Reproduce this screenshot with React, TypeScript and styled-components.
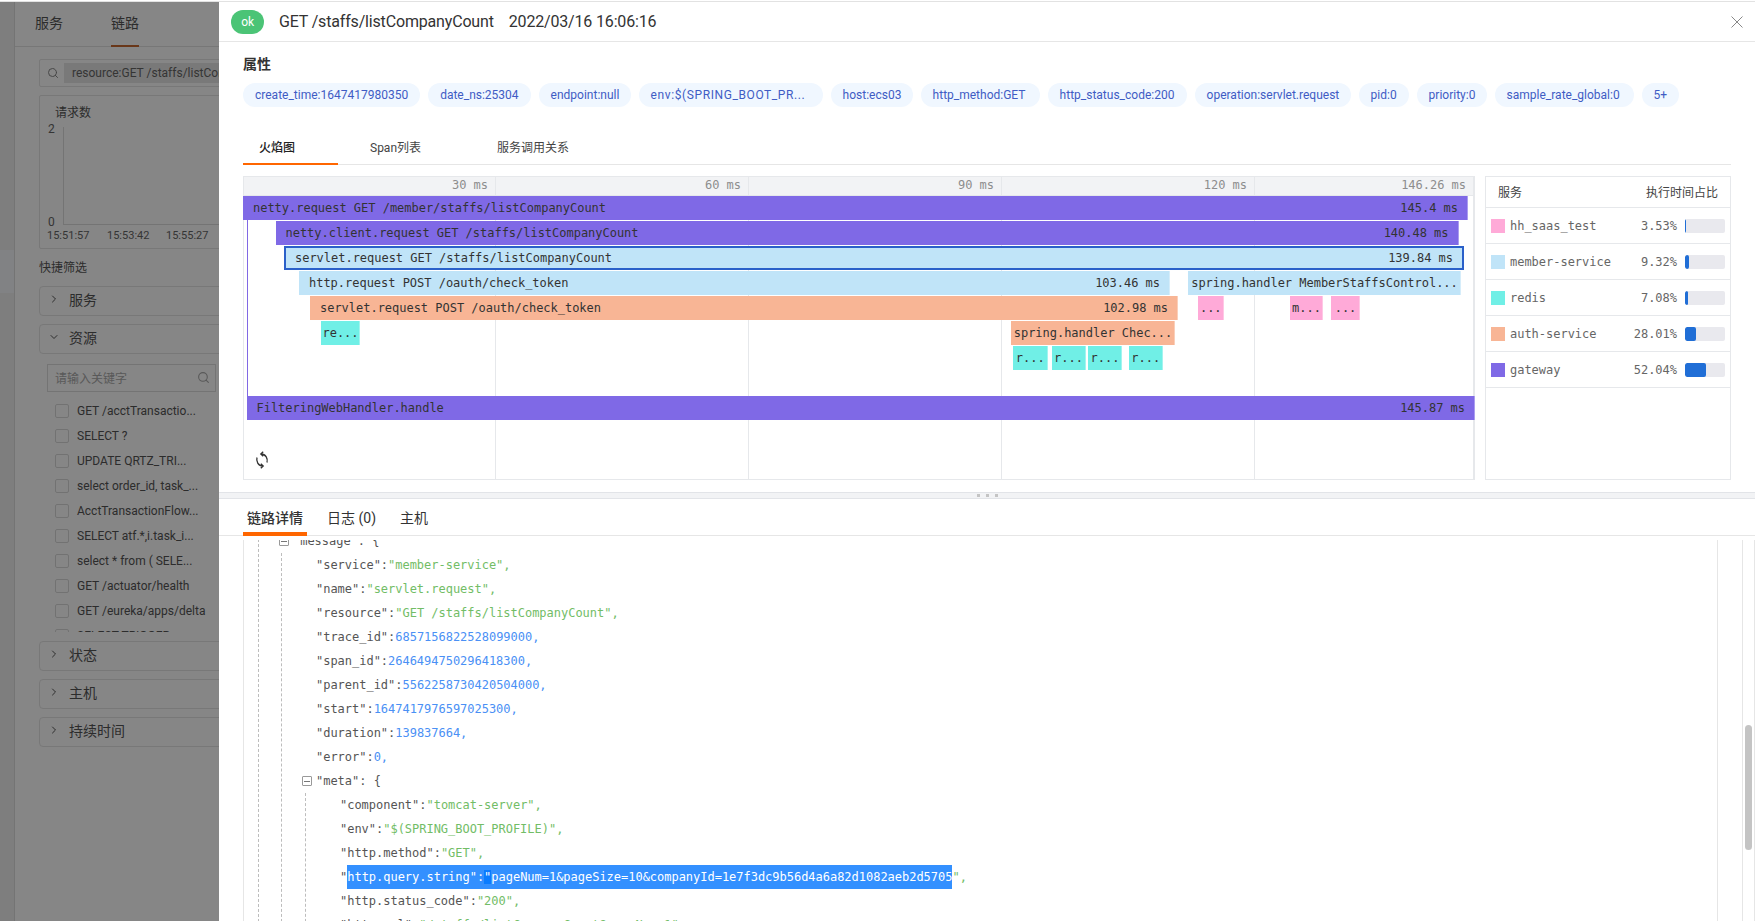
import React from 'react';
import styled, { createGlobalStyle } from 'styled-components';
import { FiChevronDown, FiChevronRight, FiSearch } from 'react-icons/fi';

const UI = `Roboto, "Noto Sans CJK SC", sans-serif`;
const MONO = `"DejaVu Sans Mono", "Noto Sans CJK SC", monospace`;

const Global = createGlobalStyle`
  html, body { margin: 0; padding: 0; height: 921px; overflow: hidden; background: #fff; }
  * { box-sizing: border-box; }
  body { font-family: ${UI}; font-size: 12px; color: #333; }
`;

const TopRule = styled.div`
  height: 2px;
  background: #fff;
  border-bottom: 1px solid #e2e2e2;
`;
const Shell = styled.div`
  display: flex;
  height: 919px;
`;

/* ---------- dimmed page behind the drawer ---------- */
const Behind = styled.aside`
  position: relative;
  width: 219px;
  flex: none;
  display: flex;
  overflow: hidden;
`;
const Mask = styled.div`
  position: absolute;
  inset: 0;
  background: rgba(0, 0, 0, 0.475);
`;
const NavStrip = styled.div`
  width: 15px;
  flex: none;
  background: #f0f0f0;
  border-right: 1px solid #dcdcdc;
  padding-top: 248px;
`;
const NavActive = styled.div`
  height: 43px;
  background: #f5f7fb;
`;
const BehindBody = styled.div`
  width: 600px;
  flex: none;
  color: #555;
`;
const PageTabs = styled.div`
  height: 45px;
  display: flex;
  gap: 48px;
  padding-left: 20px;
  border-bottom: 1px solid #e2e2e2;
`;
const PageTab = styled.div<{ $active?: boolean }>`
  height: 45px;
  padding-top: 10px;
  font-size: 14px;
  line-height: 22px;
  ${(p) => (p.$active ? 'border-bottom: 2px solid #c96a30;' : '')}
`;
const BehindInner = styled.div`
  padding: 12px 0 0 24px;
`;
const QueryBox = styled.div`
  height: 28px;
  display: flex;
  align-items: center;
  gap: 5px;
  padding-left: 7px;
  border: 1px solid #e4e4e4;
  border-radius: 2px;
  color: #888;
`;
const QueryChip = styled.div`
  height: 20px;
  line-height: 20px;
  padding-left: 8px;
  flex: 1;
  background: #e6e6e6;
  color: #666;
  font-size: 12px;
  white-space: nowrap;
`;
const ChartCard = styled.div`
  margin-top: 8px;
  height: 154px;
  border: 1px solid #e4e4e4;
  border-radius: 2px;
  padding: 8px 0 0 15px;
`;
const ChartTitle = styled.div`
  line-height: 18px;
  font-size: 12px;
`;
const ChartSvg = styled.svg`
  display: block;
  margin-left: -8px;
  font-family: ${UI};
  font-size: 11px;
`;
const QuickTitle = styled.div`
  margin-top: 9px;
  line-height: 20px;
  font-size: 12px;
`;
const Panel = styled.div<{ $gap?: number }>`
  margin-top: ${(p) => p.$gap ?? 8}px;
  height: 30px;
  display: flex;
  align-items: center;
  gap: 9px;
  padding: 0 0 5px 8px;
  border: 1px solid #e4e4e4;
  border-radius: 4px;
  font-size: 14px;
`;
const FilterInput = styled.div`
  margin: 10px 0 0 8px;
  height: 28px;
  width: 169px;
  display: flex;
  align-items: center;
  justify-content: space-between;
  padding: 0 5px 2px 7px;
  border: 1px solid #dcdcdc;
  color: #aaa;
  font-size: 12px;
`;
const FilterList = styled.div`
  margin: 6px 0 0 16px;
  height: 234px;
  overflow: hidden;
`;
const FilterItem = styled.label`
  height: 25px;
  display: flex;
  align-items: center;
  gap: 8px;
  font-size: 12px;
  white-space: nowrap;
`;
const Check = styled.span`
  width: 14px;
  height: 14px;
  border: 1px solid #d9d9d9;
  border-radius: 2px;
  flex: none;
`;

/* ---------- drawer ---------- */
const Drawer = styled.main`
  flex: 1;
  min-width: 0;
  display: flex;
  flex-direction: column;
  background: #fff;
`;
const Header = styled.header`
  height: 40px;
  flex: none;
  display: flex;
  align-items: center;
  padding: 0 12px;
  border-bottom: 1px solid #e6e6e6;
  font-size: 16px;
  letter-spacing: -0.17px;
  color: #333;
`;
const StatusBadge = styled.span`
  width: 33px;
  height: 24px;
  margin-right: 15px;
  border-radius: 12px;
  background: #4bc476;
  color: #fff;
  font-size: 12px;
  line-height: 24px;
  text-align: center;
`;
const Time = styled.span`
  margin-left: 15px;
`;
const CloseIcon = styled.svg`
  margin-left: auto;
  display: block;
`;
const Upper = styled.section`
  padding: 12px 24px 0;
  flex: none;
`;
const SectionTitle = styled.h3`
  margin: 0;
  font-size: 14px;
  line-height: 20px;
  font-weight: 600;
  color: #333;
`;
const Tags = styled.div`
  margin-top: 9px;
  display: flex;
  gap: 8px;
`;
const Tag = styled.span<{ $w?: number; $spaced?: boolean }>`
  height: 24px;
  line-height: 24px;
  padding: 0 12px;
  border-radius: 12px;
  background: #f0f7ff;
  color: #3f5cc4;
  font-size: 12px;
  white-space: nowrap;
  ${(p) => (p.$w ? `width: ${p.$w}px;` : '')}
  ${(p) => (p.$spaced ? 'letter-spacing: 0.6px;' : '')}
`;
const ViewTabs = styled.nav`
  margin-top: 26px;
  height: 32px;
  display: flex;
  gap: 16px;
  border-bottom: 1px solid #e6e6e6;
`;
const ViewTab = styled.div<{ $w: number; $active?: boolean }>`
  width: ${(p) => p.$w}px;
  height: 32px;
  padding-left: 16px;
  line-height: 31px;
  font-size: 12px;
  color: ${(p) => (p.$active ? '#222' : '#444')};
  ${(p) => (p.$active ? 'border-bottom: 2px solid #ff6600; font-weight: 500;' : '')}
`;
const Split = styled.div`
  margin-top: 11px;
  height: 304px;
  display: flex;
  gap: 10px;
`;
const Flame = styled.div`
  position: relative;
  width: 1232px;
  flex: none;
  display: flex;
  border: 1px solid #e6e8eb;
  border-top: 0;
`;
const FlameCol = styled.div<{ $w?: number }>`
  ${(p) => (p.$w ? `width: ${p.$w}px; flex: none;` : 'flex: 1;')}
  border-right: 1px solid #e6e8eb;
  &:last-of-type { border-right: 0; }
`;
const AxisCell = styled.div`
  height: 20px;
  background: #f2f3f5;
  border-top: 1px solid #e6e8eb;
  border-bottom: 1px solid #e6e8eb;
  padding-right: 7px;
  text-align: right;
  font: 12px/17px ${MONO};
  letter-spacing: -0.02px;
  color: #8d8d8d;
`;
const Bar = styled.div<{ $selected?: boolean; $tiny?: boolean }>`
  position: absolute;
  height: 24px;
  display: flex;
  align-items: center;
  justify-content: ${(p) => (p.$tiny ? 'center' : 'space-between')};
  padding: 0 ${(p) => (p.$tiny ? 0 : p.$selected ? 9 : 10)}px;
  font: 12px/24px ${MONO};
  letter-spacing: -0.02px;
  color: #333;
  white-space: pre;
  overflow: hidden;
  box-shadow: inset -1px 0 0 rgba(255, 255, 255, 0.35);
  ${(p) => (p.$selected ? 'border: 2px solid #2a60c9; box-shadow: none;' : '')}
`;
const Connector = styled.div`
  position: absolute;
  left: 3px;
  top: 44px;
  width: 1px;
  height: 176px;
  background: #8068e4;
`;
const RefreshIcon = styled.svg`
  position: absolute;
  left: 11px;
  top: 275px;
  display: block;
`;
const ServiceBox = styled.div`
  flex: 1;
  border: 1px solid #e6e8eb;
`;
const ServiceHead = styled.div`
  height: 31px;
  display: flex;
  align-items: center;
  justify-content: space-between;
  padding: 0 12px 2px;
  border-bottom: 1px solid #e6e8eb;
  font-size: 12px;
  color: #444;
`;
const ServiceRow = styled.div`
  height: 36px;
  display: flex;
  align-items: center;
  padding: 0 5px;
  border-bottom: 1px solid #e6e8eb;
  font: 12px ${MONO};
  letter-spacing: -0.02px;
  color: #666;
`;
const Swatch = styled.span<{ $c: string }>`
  width: 14px;
  height: 14px;
  margin-right: 5px;
  background: ${(p) => p.$c};
  flex: none;
`;
const ServiceName = styled.span`
  flex: 1;
`;
const Meter = styled.span`
  width: 40px;
  height: 14px;
  margin-left: 8px;
  background: #e9e9ee;
  border-radius: 2px;
  overflow: hidden;
  display: block;
`;
const MeterFill = styled.span`
  display: block;
  height: 100%;
  background: #206ed6;
  border-radius: 2px;
`;
const Divider = styled.div`
  margin-top: 12px;
  height: 7px;
  flex: none;
  display: flex;
  align-items: center;
  justify-content: center;
  gap: 6px;
  background: #f2f3f5;
  border-top: 1px solid #e2e4e8;
  border-bottom: 1px solid #e2e4e8;
`;
const Grip = styled.i`
  width: 3px;
  height: 3px;
  background: #c4c4c4;
`;
const DetailTabs = styled.nav`
  height: 37px;
  flex: none;
  display: flex;
  gap: 16px;
  padding-left: 24px;
  border-bottom: 1px solid #e6e6e6;
`;
const DetailTab = styled.div<{ $active?: boolean }>`
  height: 37px;
  padding: 8px 4px 0;
  line-height: 22px;
  font-size: 14px;
  color: #333;
  ${(p) => (p.$active ? 'border-bottom: 4px solid #ff6600; font-weight: 500;' : '')}
`;
const DetailBody = styled.div`
  margin-top: 4px;
  flex: 1;
  min-height: 0;
  display: flex;
  padding-left: 24px;
`;
const JsonPane = styled.div`
  width: 1475px;
  flex: none;
  overflow: hidden;
  border-left: 1px solid #e6e6e6;
  border-right: 1px solid #e6e6e6;
  font: 12px/24px ${MONO};
  letter-spacing: -0.02px;
  color: #555;
  white-space: pre;
`;
const JsonScroll = styled.div`
  margin-top: -11px;
`;
const Block = styled.div<{ $ml: number }>`
  margin-left: ${(p) => p.$ml}px;
  border-left: 1px dashed #bdbdbd;
`;
const Line = styled.div`
  height: 24px;
  padding-left: 34px;
  display: flex;
`;
const Toggle = styled.span`
  width: 10px;
  height: 10px;
  margin: 7px 4px 0 -14px;
  border: 1px solid #999;
  border-radius: 1px;
  flex: none;
  display: flex;
  align-items: center;
  justify-content: center;
  background: #fff;
  &::after { content: ''; width: 6px; height: 1px; background: #777; }
`;
const Str = styled.span`
  color: #72bd66;
`;
const Num = styled.span`
  color: #4a90f5;
`;
const Selected = styled.span`
  background: #3390ff;
  color: #fff;
`;
const SelectedDeep = styled.span`
  background: #0a7cff;
`;
const ScrollTrack = styled.div`
  margin-left: 24px;
  width: 13px;
  flex: none;
  padding: 185px 2px 0;
  border-left: 1px solid #e6e6e6;
  border-right: 1px solid #e6e6e6;
`;
const ScrollThumb = styled.div`
  height: 125px;
  width: 7px;
  border-radius: 4px;
  background: #c4c4c4;
`;

const PURPLE = '#7f69e6';
const BLUE = '#c0e4f8';
const ORANGE = '#f8b595';
const TEAL = '#70efe6';
const PINK = '#ffaad8';

type Span = {
  x0: number; x1: number; y: number; c: string; label: string; time?: string; selected?: boolean; tiny?: boolean;
};
const spans: Span[] = [
  { x0: 243, x1: 1468, y: 196, c: PURPLE, label: 'netty.request GET /member/staffs/listCompanyCount', time: '145.4 ms' },
  { x0: 275.5, x1: 1458.5, y: 221, c: PURPLE, label: 'netty.client.request GET /staffs/listCompanyCount', time: '140.48 ms' },
  { x0: 284, x1: 1464, y: 246, c: BLUE, label: 'servlet.request GET /staffs/listCompanyCount', time: '139.84 ms', selected: true },
  { x0: 299, x1: 1170, y: 271, c: BLUE, label: 'http.request POST /oauth/check_token', time: '103.46 ms' },
  { x0: 1188, x1: 1461, y: 271, c: BLUE, label: 'spring.handler MemberStaffsControl...', tiny: true },
  { x0: 310, x1: 1178, y: 296, c: ORANGE, label: 'servlet.request POST /oauth/check_token', time: '102.98 ms' },
  { x0: 1198, x1: 1223.5, y: 296, c: PINK, label: '...', tiny: true },
  { x0: 1290, x1: 1323, y: 296, c: PINK, label: 'm...', tiny: true },
  { x0: 1331, x1: 1360, y: 296, c: PINK, label: '...', tiny: true },
  { x0: 321, x1: 360, y: 321, c: TEAL, label: 're...', tiny: true },
  { x0: 1011, x1: 1175, y: 321, c: ORANGE, label: 'spring.handler Chec...', tiny: true },
  { x0: 1012.5, x1: 1048, y: 346, c: TEAL, label: 'r...', tiny: true },
  { x0: 1051.5, x1: 1085.5, y: 346, c: TEAL, label: 'r...', tiny: true },
  { x0: 1088, x1: 1122, y: 346, c: TEAL, label: 'r...', tiny: true },
  { x0: 1129, x1: 1162.5, y: 346, c: TEAL, label: 'r...', tiny: true },
  { x0: 246.5, x1: 1475, y: 396, c: PURPLE, label: 'FilteringWebHandler.handle', time: '145.87 ms' },
];

const axis: { w?: number; label: string }[] = [
  { w: 252, label: '30 ms' },
  { w: 253, label: '60 ms' },
  { w: 253, label: '90 ms' },
  { w: 253, label: '120 ms' },
  { label: '146.26 ms' },
];

const services = [
  { name: 'hh_saas_test', pct: 3.53, c: PINK },
  { name: 'member-service', pct: 9.32, c: BLUE },
  { name: 'redis', pct: 7.08, c: TEAL },
  { name: 'auth-service', pct: 28.01, c: ORANGE },
  { name: 'gateway', pct: 52.04, c: PURPLE },
];

const tags: { text: string; w?: number; spaced?: boolean }[] = [
  { text: 'create_time:1647417980350' },
  { text: 'date_ns:25304' },
  { text: 'endpoint:null', w: 92 },
  { text: 'env:$(SPRING_BOOT_PR...', w: 184, spaced: true },
  { text: 'host:ecs03', w: 82 },
  { text: 'http_method:GET', w: 119 },
  { text: 'http_status_code:200', w: 139 },
  { text: 'operation:servlet.request', w: 156 },
  { text: 'pid:0', w: 50 },
  { text: 'priority:0', w: 70 },
  { text: 'sample_rate_global:0', w: 139 },
  { text: '5+', w: 37 },
];

const filters = [
  'GET /acctTransactio...', 'SELECT ?', 'UPDATE QRTZ_TRI...', 'select order_id, task_...', 'AcctTransactionFlow...',
  'SELECT atf.*,i.task_i...', 'select * from ( SELE...', 'GET /actuator/health', 'GET /eureka/apps/delta', 'SELECT TRIGGER',
];

export default function App() {
  return (
    <>
      <Global />
      <TopRule />
      <Shell>
        <Behind>
          <NavStrip><NavActive /></NavStrip>
          <BehindBody>
            <PageTabs>
              <PageTab>服务</PageTab>
              <PageTab $active>链路</PageTab>
            </PageTabs>
            <BehindInner>
              <QueryBox>
                <FiSearch size={12} />
                <QueryChip>resource:GET /staffs/listCompanyCount</QueryChip>
              </QueryBox>
              <ChartCard>
                <ChartTitle>请求数</ChartTitle>
                <ChartSvg width="400" height="126" viewBox="0 0 400 126">
                  <line x1="16.5" y1="5" x2="16.5" y2="103" stroke="#ddd" />
                  <line x1="16.5" y1="102.5" x2="400" y2="102.5" stroke="#ddd" />
                  <text x="1" y="11" fontSize="12" fill="#666">2</text>
                  <text x="1" y="104" fontSize="12" fill="#666">0</text>
                  <text x="0" y="117" fill="#666">15:51:57</text>
                  <text x="60" y="117" fill="#666">15:53:42</text>
                  <text x="119" y="117" fill="#666">15:55:27</text>
                </ChartSvg>
              </ChartCard>
              <QuickTitle>快捷筛选</QuickTitle>
              <Panel><FiChevronRight size={12} />服务</Panel>
              <Panel><FiChevronDown size={12} />资源</Panel>
              <FilterInput>请输入关键字<FiSearch size={13} /></FilterInput>
              <FilterList>
                {filters.map((f) => (
                  <FilterItem key={f}><Check />{f}</FilterItem>
                ))}
              </FilterList>
              <Panel $gap={9}><FiChevronRight size={12} />状态</Panel>
              <Panel><FiChevronRight size={12} />主机</Panel>
              <Panel><FiChevronRight size={12} />持续时间</Panel>
            </BehindInner>
          </BehindBody>
          <Mask />
        </Behind>

        <Drawer>
          <Header>
            <StatusBadge>ok</StatusBadge>
            <span>GET /staffs/listCompanyCount</span>
            <Time>2022/03/16 16:06:16</Time>
            <CloseIcon width="12" height="12" viewBox="0 0 12 12" fill="none" stroke="#888" strokeWidth="1">
              <path d="M0.5 0.5 L11.5 11.5 M11.5 0.5 L0.5 11.5" />
            </CloseIcon>
          </Header>
          <Upper>
            <SectionTitle>属性</SectionTitle>
            <Tags>{tags.map((t) => <Tag key={t.text} $w={t.w} $spaced={t.spaced}>{t.text}</Tag>)}</Tags>
            <ViewTabs>
              <ViewTab $w={95} $active>火焰图</ViewTab>
              <ViewTab $w={111}>Span列表</ViewTab>
              <ViewTab $w={150}>服务调用关系</ViewTab>
            </ViewTabs>
            <Split>
              <Flame>
                {axis.map((a) => (
                  <FlameCol key={a.label} $w={a.w}><AxisCell>{a.label}</AxisCell></FlameCol>
                ))}
                <Connector />
                {spans.map((s) => (
                  <Bar
                    key={`${s.label}${s.x0}`}
                    $selected={s.selected}
                    $tiny={s.tiny}
                    style={{ left: s.x0 - 244, width: s.x1 - s.x0, top: s.y - 176, background: s.c }}
                  >
                    <span>{s.label}</span>
                    {s.time && <span>{s.time}</span>}
                  </Bar>
                ))}
                <RefreshIcon width="14" height="18" viewBox="0 0 14 18" fill="none" stroke="#333" strokeWidth="1.3">
                  <path d="M12 11.5 C13 8 11 3 6 3 M8.2 0.8 L5.8 3 L8.2 5.2" />
                  <path d="M2 6.5 C1 10 3 15 8 15 M5.8 12.8 L8.2 15 L5.8 17.2" />
                </RefreshIcon>
              </Flame>
              <ServiceBox>
                <ServiceHead><span>服务</span><span>执行时间占比</span></ServiceHead>
                {services.map((s) => (
                  <ServiceRow key={s.name}>
                    <Swatch $c={s.c} />
                    <ServiceName>{s.name}</ServiceName>
                    <span>{s.pct.toFixed(2)}%</span>
                    <Meter><MeterFill style={{ width: `${s.pct}%` }} /></Meter>
                  </ServiceRow>
                ))}
              </ServiceBox>
            </Split>
          </Upper>
          <Divider><Grip /><Grip /><Grip /></Divider>
          <DetailTabs>
            <DetailTab $active>链路详情</DetailTab>
            <DetailTab>日志 (0)</DetailTab>
            <DetailTab>主机</DetailTab>
          </DetailTabs>
          <DetailBody>
            <JsonPane>
              <JsonScroll>
                <Block $ml={14}>
                  <Line><Toggle />"message": {'{'}</Line>
                  <Block $ml={22}>
                    <Line>"service":<Str>"member-service"</Str><Str>,</Str></Line>
                    <Line>"name":<Str>"servlet.request"</Str><Str>,</Str></Line>
                    <Line>"resource":<Str>"GET /staffs/listCompanyCount"</Str><Str>,</Str></Line>
                    <Line>"trace_id":<Num>6857156822528099000</Num><Num>,</Num></Line>
                    <Line>"span_id":<Num>2646494750296418300</Num><Num>,</Num></Line>
                    <Line>"parent_id":<Num>5562258730420504000</Num><Num>,</Num></Line>
                    <Line>"start":<Num>1647417976597025300</Num><Num>,</Num></Line>
                    <Line>"duration":<Num>139837664</Num><Num>,</Num></Line>
                    <Line>"error":<Num>0</Num><Num>,</Num></Line>
                    <Line><Toggle />"meta": {'{'}</Line>
                    <Block $ml={23}>
                      <Line>"component":<Str>"tomcat-server"</Str><Str>,</Str></Line>
                      <Line>"env":<Str>"$(SPRING_BOOT_PROFILE)"</Str><Str>,</Str></Line>
                      <Line>"http.method":<Str>"GET"</Str><Str>,</Str></Line>
                      <Line>
                        "<Selected>http.query.string":<SelectedDeep>"</SelectedDeep>pageNum=1&amp;pageSize=10&amp;companyId=1e7f3dc9b56d4a6a82d1082aeb2d5705</Selected><Str>",</Str>
                      </Line>
                      <Line>"http.status_code":<Str>"200"</Str><Str>,</Str></Line>
                      <Line>"http.url":<Str>"/staffs/listCompanyCount?pageNum=1"</Str><Str>,</Str></Line>
                    </Block>
                  </Block>
                </Block>
              </JsonScroll>
            </JsonPane>
            <ScrollTrack><ScrollThumb /></ScrollTrack>
          </DetailBody>
        </Drawer>
      </Shell>
    </>
  );
}
